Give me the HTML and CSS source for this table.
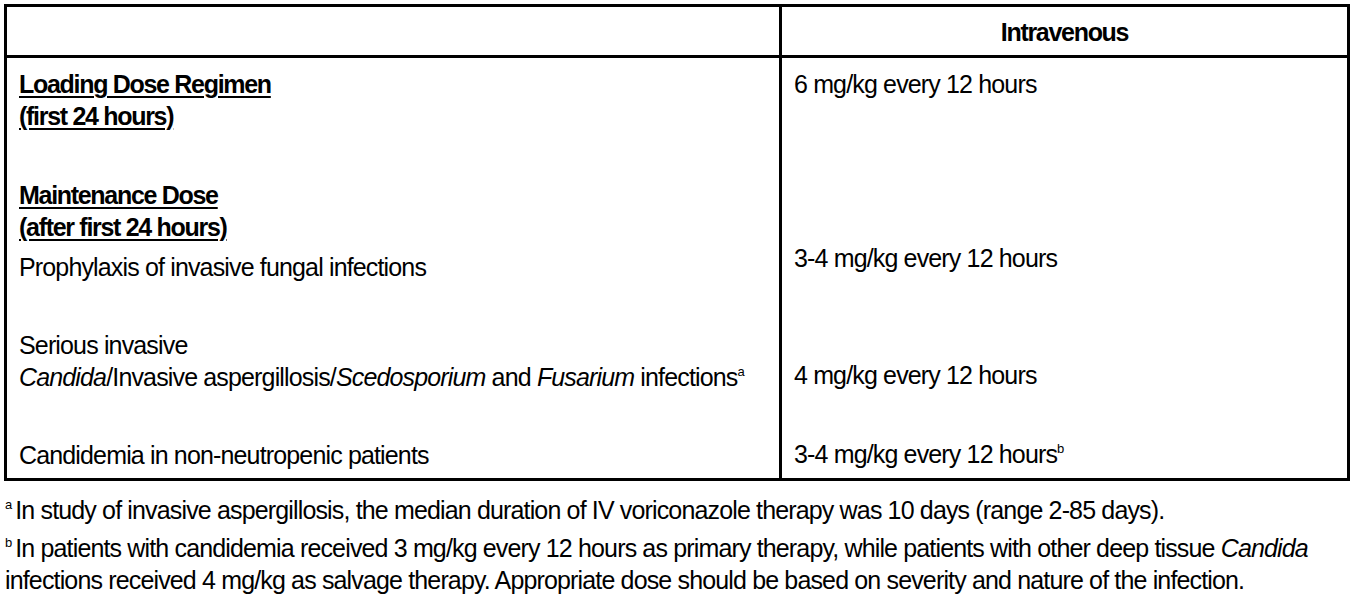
FILE: index.html
```html
<!DOCTYPE html>
<html lang="en">
<head>
<meta charset="utf-8">
<title>Dosing table</title>
<link rel="stylesheet" href="styles.css">
</head>
<body>
<div class="page">
  <div class="dose-table">
    <div class="cell head-left"></div>
    <div class="cell head-right">Intravenous</div>

    <div class="cell left row-load">
      <p class="heading">Loading Dose Regimen<br>(first 24 hours)</p>
    </div>
    <div class="cell right row-load">
      <p class="line">6 mg/kg every 12 hours</p>
    </div>

    <div class="cell left row-maint">
      <p class="heading">Maintenance Dose<br>(after first 24 hours)</p>
      <p class="line prophy">Prophylaxis of invasive fungal infections</p>
    </div>
    <div class="cell right row-maint">
      <p class="line">3-4 mg/kg every 12 hours</p>
    </div>

    <div class="cell left row-serious">
      <p class="line">Serious invasive<br><i>Candida</i>/Invasive aspergillosis/<i>Scedosporium</i> and <i>Fusarium</i> infections<sup>a</sup></p>
    </div>
    <div class="cell right row-serious">
      <p class="line">4 mg/kg every 12 hours</p>
    </div>

    <div class="cell left row-cand">
      <p class="line">Candidemia in non-neutropenic patients</p>
    </div>
    <div class="cell right row-cand">
      <p class="line">3-4 mg/kg every 12 hours<sup>b</sup></p>
    </div>
  </div>

  <div class="notes">
    <p class="note"><sup>a</sup>In study of invasive aspergillosis, the median duration of IV voriconazole therapy was 10 days (range 2-85 days).</p>
    <p class="note"><sup>b</sup>In patients with candidemia received 3 mg/kg every 12 hours as primary therapy, while patients with other deep tissue <i>Candida</i> infections received 4 mg/kg as salvage therapy. Appropriate dose should be based on severity and nature of the infection.</p>
  </div>
</div>
</body>
</html>
```

FILE: styles.css
```css
html, body {
  margin: 0;
  padding: 0;
  background: #ffffff;
}

body {
  font-family: "Liberation Sans", Arial, sans-serif;
  font-size: 25px;
  line-height: 32px;
  letter-spacing: -0.85px;
  color: #000000;
}

.page {
  padding: 4px 0 0 4px;
}

p {
  margin: 0;
}

.dose-table {
  display: grid;
  grid-template-columns: 772px 1fr;
  width: 1346px;
  box-sizing: border-box;
  border: 3px solid #000;
}

.cell {
  box-sizing: border-box;
}

.right {
  border-left: 3px solid #000;
  padding-left: 12px;
}

.left {
  padding-left: 12px;
}

.head-left {
  height: 51px;
  border-bottom: 3px solid #000;
}

.head-right {
  height: 51px;
  border-bottom: 3px solid #000;
  border-left: 3px solid #000;
  font-weight: bold;
  letter-spacing: -1.3px;
  text-align: center;
  line-height: 48px;
  padding-top: 1px;
}

.heading {
  font-weight: bold;
  letter-spacing: -1.3px;
  text-decoration: underline;
  text-decoration-thickness: 2px;
  text-underline-offset: 3px;
}

.left.row-load p,
.right.row-load p {
  margin-top: 10px;
}

.left.row-maint .heading {
  margin-top: 47px;
}

.left.row-maint .prophy {
  margin-top: 8px;
}

.right.row-maint p {
  margin-top: 110px;
}

.left.row-serious p {
  margin-top: 46px;
}

.right.row-serious p {
  margin-top: 76px;
}

.left.row-cand p {
  margin-top: 46px;
  padding-bottom: 7px;
}

.right.row-cand p {
  margin-top: 45px;
}

sup {
  font-size: 13px;
  letter-spacing: 0;
  line-height: 0;
  vertical-align: 10px;
}

.notes {
  padding-top: 13px;
}

.note + .note {
  margin-top: 6px;
}

.note {
  padding-left: 1px;
  padding-right: 40px;
}

.note sup {
  margin-right: 3px;
}
```
